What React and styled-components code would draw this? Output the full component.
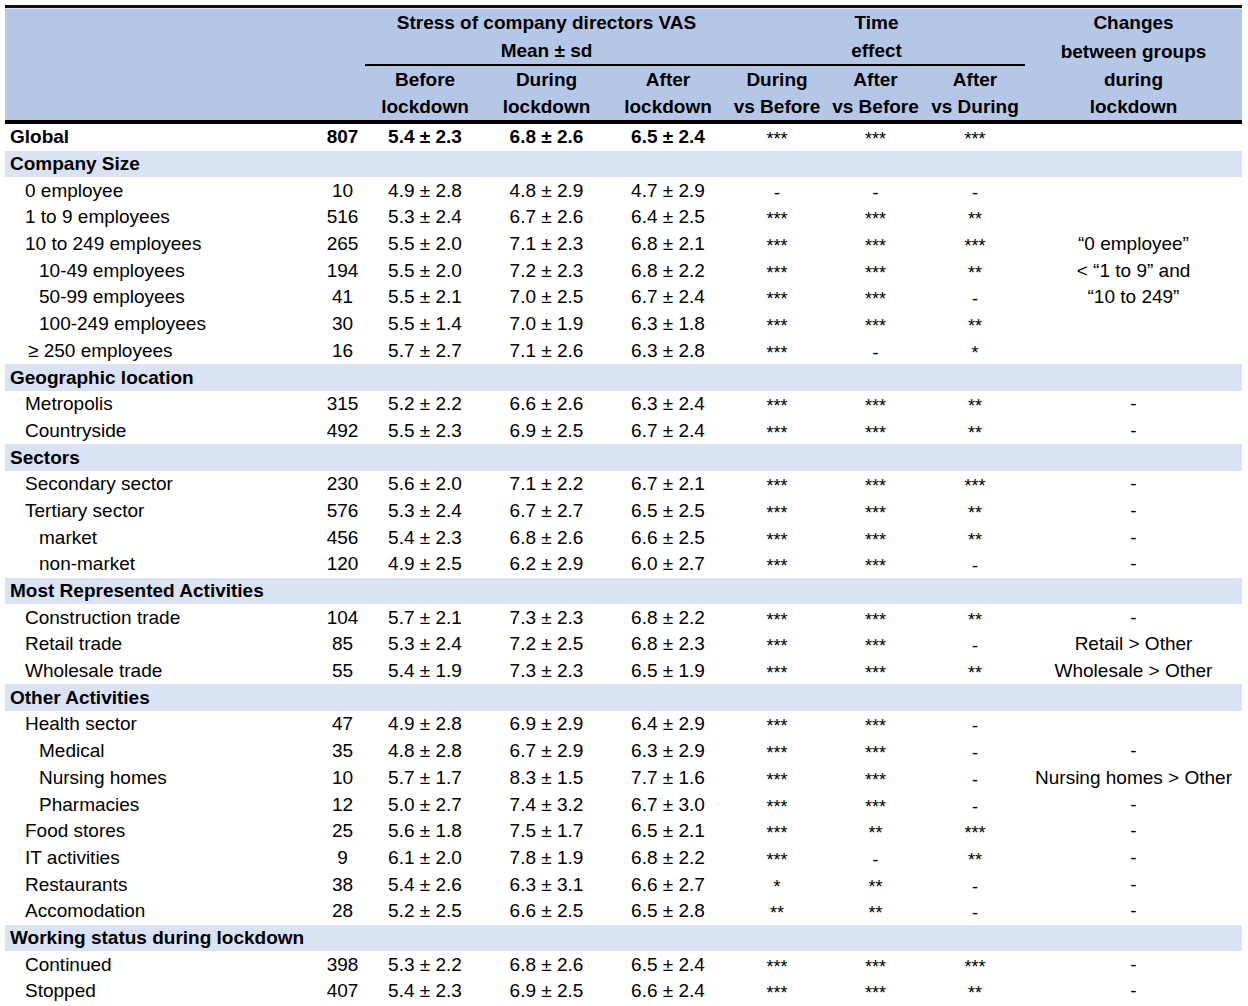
import React from 'react';
import styled, { createGlobalStyle } from 'styled-components';

const GlobalStyle = createGlobalStyle`
  html, body {
    margin: 0;
    padding: 0;
    background: #ffffff;
  }
  body {
    font-family: "Liberation Sans", Arial, sans-serif;
    color: #000;
  }
`;

const COLUMNS = '315px 45px 120px 123px 120px 98px 99px 100px 217px';

const Page = styled.div`
  padding: 5px 0 0 5px;
  width: 1237px;
`;

const Header = styled.div`
  display: grid;
  grid-template-columns: ${COLUMNS};
  grid-template-rows: 29px 29px 27px 27px;
  background: #b4c7e7;
  border-top: 3px solid #111;
  border-bottom: 4px solid #000;
  box-shadow: inset 0 1px 0 #dfe7f5;
`;

const HeadText = styled.div`
  grid-column: ${(p) => p.$col};
  grid-row: ${(p) => p.$row};
  display: flex;
  align-items: center;
  justify-content: center;
  font-size: 19px;
  font-weight: 700;
  white-space: nowrap;
  border-bottom: ${(p) => (p.$rule ? '2px solid #000' : 'none')};
`;

const Body = styled.div`
  display: flex;
  flex-direction: column;
`;

const Row = styled.div`
  display: grid;
  grid-template-columns: ${COLUMNS};
  height: 26.69px;
  align-items: center;
  background: ${(p) => (p.$band ? '#dae3f3' : '#ffffff')};
  font-size: 19px;
  font-weight: ${(p) => (p.$bold ? 700 : 400)};
  white-space: nowrap;
`;

const Label = styled.div`
  padding-left: ${(p) => p.$indent}px;
`;

const CategoryLabel = styled.div`
  grid-column: 1 / -1;
  padding-left: 5px;
  font-weight: 700;
`;

const Cell = styled.div`
  text-align: center;
`;

const Note = styled.div`
  text-align: center;
  font-weight: 400;
`;

const Star = styled.div`
  text-align: center;
  font-weight: 400;
  font-size: 18px;
  padding-top: 5px;
`;

const INDENT = { top: 5, one: 20, two: 34, ge: 23 };

const rows = [
  { label: 'Global', bold: true, indent: 'top', n: '807', v: ['5.4 ± 2.3', '6.8 ± 2.6', '6.5 ± 2.4'], s: ['***', '***', '***'], c: '' },
  { cat: 'Company Size' },
  { label: '0 employee', indent: 'one', n: '10', v: ['4.9 ± 2.8', '4.8 ± 2.9', '4.7 ± 2.9'], s: ['-', '-', '-'], c: '' },
  { label: '1 to 9 employees', indent: 'one', n: '516', v: ['5.3 ± 2.4', '6.7 ± 2.6', '6.4 ± 2.5'], s: ['***', '***', '**'], c: '' },
  { label: '10 to 249 employees', indent: 'one', n: '265', v: ['5.5 ± 2.0', '7.1 ± 2.3', '6.8 ± 2.1'], s: ['***', '***', '***'], c: '“0 employee”' },
  { label: '10-49 employees', indent: 'two', n: '194', v: ['5.5 ± 2.0', '7.2 ± 2.3', '6.8 ± 2.2'], s: ['***', '***', '**'], c: '< “1 to 9” and' },
  { label: '50-99 employees', indent: 'two', n: '41', v: ['5.5 ± 2.1', '7.0 ± 2.5', '6.7 ± 2.4'], s: ['***', '***', '-'], c: '“10 to 249”' },
  { label: '100-249 employees', indent: 'two', n: '30', v: ['5.5 ± 1.4', '7.0 ± 1.9', '6.3 ± 1.8'], s: ['***', '***', '**'], c: '' },
  { label: '≥ 250 employees', indent: 'ge', n: '16', v: ['5.7 ± 2.7', '7.1 ± 2.6', '6.3 ± 2.8'], s: ['***', '-', '*'], c: '' },
  { cat: 'Geographic location' },
  { label: 'Metropolis', indent: 'one', n: '315', v: ['5.2 ± 2.2', '6.6 ± 2.6', '6.3 ± 2.4'], s: ['***', '***', '**'], c: '-' },
  { label: 'Countryside', indent: 'one', n: '492', v: ['5.5 ± 2.3', '6.9 ± 2.5', '6.7 ± 2.4'], s: ['***', '***', '**'], c: '-' },
  { cat: 'Sectors' },
  { label: 'Secondary sector', indent: 'one', n: '230', v: ['5.6 ± 2.0', '7.1 ± 2.2', '6.7 ± 2.1'], s: ['***', '***', '***'], c: '-' },
  { label: 'Tertiary sector', indent: 'one', n: '576', v: ['5.3 ± 2.4', '6.7 ± 2.7', '6.5 ± 2.5'], s: ['***', '***', '**'], c: '-' },
  { label: 'market', indent: 'two', n: '456', v: ['5.4 ± 2.3', '6.8 ± 2.6', '6.6 ± 2.5'], s: ['***', '***', '**'], c: '-' },
  { label: 'non-market', indent: 'two', n: '120', v: ['4.9 ± 2.5', '6.2 ± 2.9', '6.0 ± 2.7'], s: ['***', '***', '-'], c: '-' },
  { cat: 'Most Represented Activities' },
  { label: 'Construction trade', indent: 'one', n: '104', v: ['5.7 ± 2.1', '7.3 ± 2.3', '6.8 ± 2.2'], s: ['***', '***', '**'], c: '-' },
  { label: 'Retail trade', indent: 'one', n: '85', v: ['5.3 ± 2.4', '7.2 ± 2.5', '6.8 ± 2.3'], s: ['***', '***', '-'], c: 'Retail > Other' },
  { label: 'Wholesale trade', indent: 'one', n: '55', v: ['5.4 ± 1.9', '7.3 ± 2.3', '6.5 ± 1.9'], s: ['***', '***', '**'], c: 'Wholesale > Other' },
  { cat: 'Other Activities' },
  { label: 'Health sector', indent: 'one', n: '47', v: ['4.9 ± 2.8', '6.9 ± 2.9', '6.4 ± 2.9'], s: ['***', '***', '-'], c: '' },
  { label: 'Medical', indent: 'two', n: '35', v: ['4.8 ± 2.8', '6.7 ± 2.9', '6.3 ± 2.9'], s: ['***', '***', '-'], c: '-' },
  { label: 'Nursing homes', indent: 'two', n: '10', v: ['5.7 ± 1.7', '8.3 ± 1.5', '7.7 ± 1.6'], s: ['***', '***', '-'], c: 'Nursing homes > Other' },
  { label: 'Pharmacies', indent: 'two', n: '12', v: ['5.0 ± 2.7', '7.4 ± 3.2', '6.7 ± 3.0'], s: ['***', '***', '-'], c: '-' },
  { label: 'Food stores', indent: 'one', n: '25', v: ['5.6 ± 1.8', '7.5 ± 1.7', '6.5 ± 2.1'], s: ['***', '**', '***'], c: '-' },
  { label: 'IT activities', indent: 'one', n: '9', v: ['6.1 ± 2.0', '7.8 ± 1.9', '6.8 ± 2.2'], s: ['***', '-', '**'], c: '-' },
  { label: 'Restaurants', indent: 'one', n: '38', v: ['5.4 ± 2.6', '6.3 ± 3.1', '6.6 ± 2.7'], s: ['*', '**', '-'], c: '-' },
  { label: 'Accomodation', indent: 'one', n: '28', v: ['5.2 ± 2.5', '6.6 ± 2.5', '6.5 ± 2.8'], s: ['**', '**', '-'], c: '-' },
  { cat: 'Working status during lockdown' },
  { label: 'Continued', indent: 'one', n: '398', v: ['5.3 ± 2.2', '6.8 ± 2.6', '6.5 ± 2.4'], s: ['***', '***', '***'], c: '-' },
  { label: 'Stopped', indent: 'one', n: '407', v: ['5.4 ± 2.3', '6.9 ± 2.5', '6.6 ± 2.4'], s: ['***', '***', '**'], c: '-' },
];

const headTexts = [
  { col: '3 / 6', row: 1, text: 'Stress of company directors VAS' },
  { col: '3 / 6', row: 2, text: 'Mean ± sd', rule: true },
  { col: '6 / 9', row: 1, text: 'Time' },
  { col: '6 / 9', row: 2, text: 'effect', rule: true },
  { col: 9, row: 1, text: 'Changes' },
  { col: 9, row: 2, text: 'between groups' },
  { col: 9, row: 3, text: 'during' },
  { col: 9, row: 4, text: 'lockdown' },
  { col: 3, row: 3, text: 'Before' },
  { col: 3, row: 4, text: 'lockdown' },
  { col: 4, row: 3, text: 'During' },
  { col: 4, row: 4, text: 'lockdown' },
  { col: 5, row: 3, text: 'After' },
  { col: 5, row: 4, text: 'lockdown' },
  { col: 6, row: 3, text: 'During' },
  { col: 6, row: 4, text: 'vs Before' },
  { col: 7, row: 3, text: 'After' },
  { col: 7, row: 4, text: 'vs Before' },
  { col: 8, row: 3, text: 'After' },
  { col: 8, row: 4, text: 'vs During' },
];

const App = () => {
  return (
    <Page>
      <GlobalStyle />
      <Header>
        {headTexts.map((h, i) => (
          <HeadText key={i} $col={h.col} $row={h.row} $rule={h.rule}>
            {h.text}
          </HeadText>
        ))}
      </Header>
      <Body>
        {rows.map((r, i) =>
          r.cat ? (
            <Row key={i} $band>
              <CategoryLabel>{r.cat}</CategoryLabel>
            </Row>
          ) : (
            <Row key={i} $bold={r.bold}>
              <Label $indent={INDENT[r.indent]}>{r.label}</Label>
              <Cell>{r.n}</Cell>
              {r.v.map((v, j) => (
                <Cell key={j}>{v}</Cell>
              ))}
              {r.s.map((s, j) => (
                <Star key={j}>{s}</Star>
              ))}
              <Note>{r.c}</Note>
            </Row>
          )
        )}
      </Body>
    </Page>
  );
};

export default App;
